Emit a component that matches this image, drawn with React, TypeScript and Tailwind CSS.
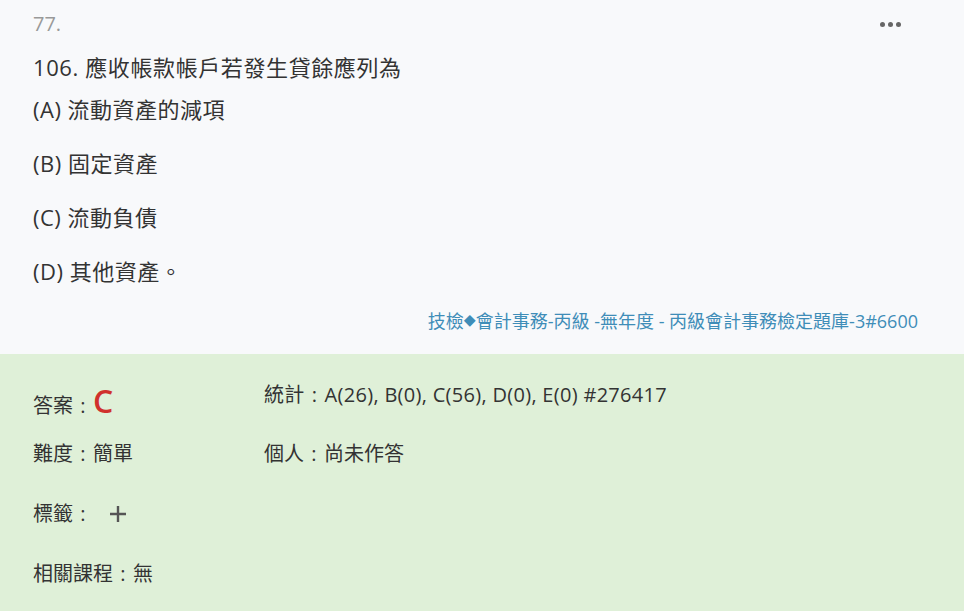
function Colon() {
  return <span className="inline-block w-[1em] text-center">:</span>;
}

export default function App() {
  return (
    <div
      lang="zh-Hant-TW"
      className="w-[964px] h-[611px] overflow-hidden bg-[#dff0d8] text-[#333]"
      style={{ fontFamily: '"Open Sans", "Noto Sans CJK TC", sans-serif' }}
    >
      <section className="bg-[#f8f9fb] px-[33px] pt-[12px] pb-[20px]">
        <div className="flex items-center justify-between">
          <div className="text-[20px] leading-[24px] text-[#999]">77.</div>
          <div className="mr-[30px] flex items-center gap-[3px]">
            <span className="h-[5px] w-[5px] rounded-full bg-[#666]"></span>
            <span className="h-[5px] w-[5px] rounded-full bg-[#666]"></span>
            <span className="h-[5px] w-[5px] rounded-full bg-[#666]"></span>
          </div>
        </div>
        <div className="mt-[15px] text-[22px] leading-[32px] tracking-[0.6px]">106. 應收帳款帳戶若發生貸餘應列為</div>
        <div className="mt-[10px] flex flex-col gap-[22px] text-[22px] leading-[32px] tracking-[0.5px]">
          <div>(A) 流動資產的減項</div>
          <div>(B) 固定資產</div>
          <div>(C) 流動負債</div>
          <div>(D) 其他資產。</div>
        </div>
        <div className="mt-[22px] pr-[13px] text-right text-[18px] leading-[24px] text-[#3f8db8]">
          技檢<span className="text-[12px] align-[2px]">◆</span>會計事務-丙級 -無年度 - 丙級會計事務檢定題庫-3#6600
        </div>
      </section>

      <section className="px-[33px] pt-[27px] text-[20px]">
        <div className="flex items-start">
          <div className="flex w-[231px] items-baseline leading-[40px]">
            <span>答案</span>
            <span className="inline-block w-[20px] text-center">:</span>
            <span className="text-[32px] font-semibold text-[#d0312d]">C</span>
          </div>
          <div className="leading-[28px] tracking-[0.3px]">
            統計<Colon />A(26), B(0), C(56), D(0), E(0) #276417
          </div>
        </div>
        <div className="mt-[14px] flex leading-[28px]">
          <div className="w-[231px]">
            難度<Colon />簡單
          </div>
          <div>
            個人<Colon />尚未作答
          </div>
        </div>
        <div className="mt-[32px] flex items-center leading-[28px]">
          <span>標籤</span>
          <Colon />
          <svg className="ml-[15px]" width="20" height="20" viewBox="0 0 20 20">
            <path d="M10 2v16M2 10h16" stroke="#555" strokeWidth="2.4" fill="none" />
          </svg>
        </div>
        <div className="mt-[32px] leading-[28px]">
          相關課程<Colon />無
        </div>
      </section>
    </div>
  );
}
